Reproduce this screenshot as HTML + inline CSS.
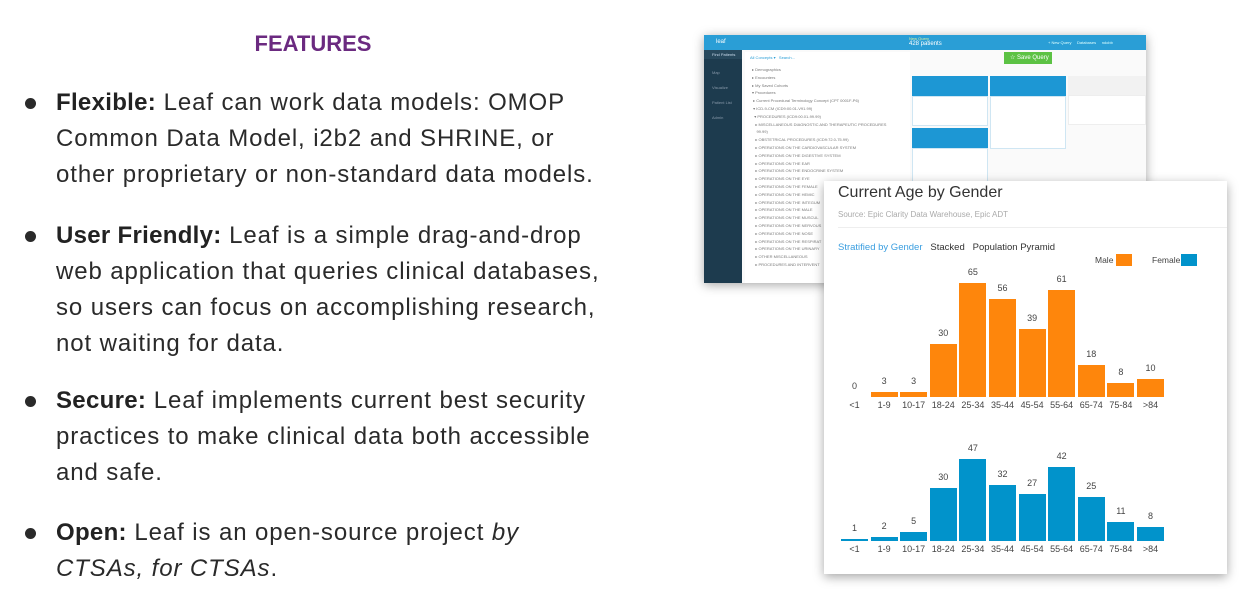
<!DOCTYPE html>
<html><head><meta charset="utf-8"><style>
*{margin:0;padding:0;box-sizing:border-box}
body{width:1258px;height:612px;background:#fff;position:relative;overflow:hidden;font-family:"Liberation Sans",sans-serif}
.h{position:absolute;left:0;width:626px;top:31px;text-align:center;color:#6b2a80;font-weight:bold;font-size:22px}
.p{position:absolute;left:56px;width:600px;font-size:24px;line-height:36px;color:#2a2a2a;white-space:nowrap;letter-spacing:0.9px}
.p b{color:#222;letter-spacing:0.3px}
.p:before{content:"";position:absolute;left:-31px;top:13px;width:11px;height:11px;border-radius:50%;background:#2a2a2a}
.a{position:absolute}
.t{position:absolute;font-size:9px;color:#444;width:30px;text-align:center}
.s{position:absolute;font-size:4px;color:#777;white-space:nowrap}
</style></head><body>
<div class="h">FEATURES</div>
<div class="p" style="top:85px"><b>Flexible:</b> Leaf can work data models: OMOP<br>Common Data Model, i2b2 and SHRINE, or<br>other proprietary or non-standard data models.</div>
<div class="p" style="top:218px"><b>User Friendly:</b> Leaf is a simple drag-and-drop<br>web application that queries clinical databases,<br>so users can focus on accomplishing research,<br>not waiting for data.</div>
<div class="p" style="top:383px"><b>Secure:</b> Leaf implements current best security<br>practices to make clinical data both accessible<br>and safe.</div>
<div class="p" style="top:515px"><b>Open:</b> Leaf is an open-source project <i>by</i><br><i>CTSAs, for CTSAs</i>.</div>

<!-- app screenshot -->
<div class="a" style="left:704px;top:35px;width:442px;height:248px;background:#fff;box-shadow:0 2px 10px rgba(0,0,0,.35)"></div>
<div class="a" style="left:704px;top:35px;width:442px;height:15px;background:#2a9ed6"></div>
<div class="s" style="left:716px;top:39px;color:#fff;font-size:6px">leaf</div>
<div class="s" style="left:909px;top:36px;color:#d8f0a0">New Query</div>
<div class="s" style="left:909px;top:41px;color:#fff;font-size:6px">428 patients</div>
<div class="s" style="left:1048px;top:40px;color:#dff">+ New Query &nbsp;&nbsp;&nbsp; Databases &nbsp;&nbsp;&nbsp; ndobb</div>
<div class="a" style="left:704px;top:50px;width:38px;height:233px;background:#1d3b4e"></div>
<div class="a" style="left:704px;top:50px;width:38px;height:9px;background:#27485c"></div>
<div class="s" style="left:712px;top:52px;color:#cde">Find Patients</div>
<div class="s" style="left:712px;top:70px;color:#89a">Map</div>
<div class="s" style="left:712px;top:85px;color:#89a">Visualize</div>
<div class="s" style="left:712px;top:100px;color:#89a">Patient List</div>
<div class="s" style="left:712px;top:115px;color:#89a">Admin</div>
<div class="a" style="left:742px;top:50px;width:404px;height:233px;background:#fafafa"></div>
<div class="a" style="left:745px;top:52px;width:165px;height:231px;background:#fff"></div>
<div class="s" style="left:750px;top:55px;color:#2a9ed6">All Concepts ▾ &nbsp; Search...</div>
<div class="s" style="left:752px;top:66px;line-height:7.8px">▸ Demographics<br>▸ Encounters<br>▸ My Saved Cohorts<br>▾ Procedures<br>&nbsp;▸ Current Procedural Terminology Concept (CPT 0001F-P6)<br>&nbsp;▾ ICD-9-CM (ICD9:00.01-V91.99)<br>&nbsp;&nbsp;▾ PROCEDURES (ICD9:00.01-99.99)<br>&nbsp;&nbsp;&nbsp;▸ MISCELLANEOUS DIAGNOSTIC AND THERAPEUTIC PROCEDURES<br>&nbsp;&nbsp;&nbsp;&nbsp;99.99)<br>&nbsp;&nbsp;&nbsp;▸ OBSTETRICAL PROCEDURES (ICD9:72.0-75.99)<br>&nbsp;&nbsp;&nbsp;▸ OPERATIONS ON THE CARDIOVASCULAR SYSTEM<br>&nbsp;&nbsp;&nbsp;▸ OPERATIONS ON THE DIGESTIVE SYSTEM<br>&nbsp;&nbsp;&nbsp;▸ OPERATIONS ON THE EAR<br>&nbsp;&nbsp;&nbsp;▸ OPERATIONS ON THE ENDOCRINE SYSTEM<br>&nbsp;&nbsp;&nbsp;▸ OPERATIONS ON THE EYE<br>&nbsp;&nbsp;&nbsp;▸ OPERATIONS ON THE FEMALE<br>&nbsp;&nbsp;&nbsp;▸ OPERATIONS ON THE HEMIC<br>&nbsp;&nbsp;&nbsp;▸ OPERATIONS ON THE INTEGUM<br>&nbsp;&nbsp;&nbsp;▸ OPERATIONS ON THE MALE<br>&nbsp;&nbsp;&nbsp;▸ OPERATIONS ON THE MUSCUL<br>&nbsp;&nbsp;&nbsp;▸ OPERATIONS ON THE NERVOUS<br>&nbsp;&nbsp;&nbsp;▸ OPERATIONS ON THE NOSE<br>&nbsp;&nbsp;&nbsp;▸ OPERATIONS ON THE RESPIRAT<br>&nbsp;&nbsp;&nbsp;▸ OPERATIONS ON THE URINARY<br>&nbsp;&nbsp;&nbsp;▸ OTHER MISCELLANEOUS<br>&nbsp;&nbsp;&nbsp;▸ PROCEDURES AND INTERVENT</div>
<div class="a" style="left:1004px;top:52px;width:48px;height:12px;background:#5cc244"></div>
<div class="s" style="left:1010px;top:54px;color:#fff;font-size:6px">☆ Save Query</div>
<div class="a" style="left:912px;top:76px;width:76px;height:20px;background:#1d97d4"></div>
<div class="a" style="left:912px;top:96px;width:76px;height:30px;background:#fff;border:1px solid #cfe6f3"></div>
<div class="a" style="left:912px;top:128px;width:76px;height:20px;background:#1d97d4"></div>
<div class="a" style="left:912px;top:148px;width:76px;height:35px;background:#fff;border:1px solid #cfe6f3"></div>
<div class="a" style="left:990px;top:76px;width:76px;height:20px;background:#1d97d4"></div>
<div class="a" style="left:990px;top:96px;width:76px;height:53px;background:#fff;border:1px solid #cfe6f3"></div>
<div class="a" style="left:1068px;top:76px;width:78px;height:19px;background:#f2f2f2"></div>
<div class="a" style="left:1068px;top:95px;width:78px;height:30px;background:#fff;border:1px solid #eee"></div>

<!-- chart card -->
<div class="a" style="left:824px;top:181px;width:403px;height:393px;background:#fff;box-shadow:0 3px 10px rgba(0,0,0,.35)"></div>
<div class="a" style="left:838px;top:184px;font-size:16px;color:#333">Current Age by Gender</div>
<div class="a" style="left:838px;top:210px;font-size:8px;color:#aaa">Source: Epic Clarity Data Warehouse, Epic ADT</div>
<div class="a" style="left:838px;top:227px;width:389px;height:1px;background:#eee"></div>
<div class="a" style="left:838px;top:242px;font-size:9.5px;color:#3a9ee0;white-space:nowrap">Stratified by Gender <span style="color:#333">&nbsp; Stacked &nbsp;&nbsp;Population Pyramid</span></div>
<div class="a" style="left:1095px;top:255px;font-size:8.5px;color:#444">Male</div>
<div class="a" style="left:1116px;top:254px;width:16px;height:12px;background:#fe860c"></div>
<div class="a" style="left:1152px;top:255px;font-size:8.5px;color:#444">Female</div>
<div class="a" style="left:1181px;top:254px;width:16px;height:12px;background:#0193cb"></div>
<div id="c"></div>
<script>
var ages=["<1","1-9","10-17","18-24","25-34","35-44","45-54","55-64","65-74","75-84",">84"];
var m=[0,3,3,30,65,56,39,61,18,8,10],f=[1,2,5,30,47,32,27,42,25,11,8];
var h="";
for(var i=0;i<11;i++){
 var x=841+29.6*i, cx=x+13.5;
 [[m[i],397,"#fe860c",400],[f[i],541,"#0193cb",544]].forEach(function(d){
  var ht=Math.max(Math.round(d[0]*1.755),d[0]?2:0);
  if(ht)h+='<div class="a" style="left:'+x+'px;top:'+(d[1]-ht)+'px;width:27px;height:'+ht+'px;background:'+d[2]+'"></div>';
  h+='<div class="t" style="left:'+(cx-15)+'px;top:'+(d[1]-ht-16)+'px">'+d[0]+'</div>';
  h+='<div class="t" style="left:'+(cx-15)+'px;top:'+d[3]+'px">'+ages[i].replace("<","&lt;").replace(">","&gt;")+'</div>';
 });
}
document.getElementById("c").innerHTML=h;
</script>
</body></html>
